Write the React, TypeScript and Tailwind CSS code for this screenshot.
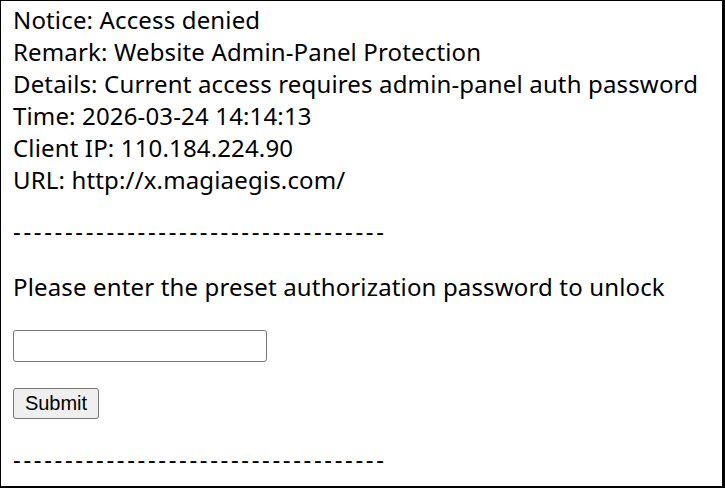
export default function App() {
  const lines = [
    "Notice: Access denied",
    "Remark: Website Admin-Panel Protection",
    "Details: Current access requires admin-panel auth password",
    "Time: 2026-03-24 14:14:13",
    "Client IP: 110.184.224.90",
    "URL: http://x.magiaegis.com/",
  ];
  const dashes = "------------------------------------";

  return (
    <div className="w-[725px] h-[488px] overflow-hidden bg-white border-l border-t border-r-[3px] border-b-2 border-black pl-3 pt-[3px] font-['Noto_Sans',sans-serif] text-[24px] leading-[32px] tracking-[0.15px] text-black">
      <div>
        {lines.map((l) => (
          <div key={l} className="whitespace-nowrap">
            {l}
          </div>
        ))}
      </div>
      <p className="mt-[19px] tracking-[2.65px]">{dashes}</p>
      <p className="mt-[24px] whitespace-nowrap">Please enter the preset authorization password to unlock</p>
      <div className="mt-[27px]">
        <input
          type="password"
          className="block w-[254px] h-[32px] border border-[#767676] rounded-[3px] bg-white px-1 text-[20px] font-['Liberation_Sans',sans-serif] outline-none"
        />
      </div>
      <div className="mt-[23px]">
        <button className="h-[31px] w-[86px] border border-[#767676] rounded-[3px] bg-[#efefef] text-[20px] leading-none tracking-normal text-black font-['Liberation_Sans',sans-serif]">
          Submit
        </button>
      </div>
      <p className="mt-[24px] tracking-[2.65px]">{dashes}</p>
    </div>
  );
}
